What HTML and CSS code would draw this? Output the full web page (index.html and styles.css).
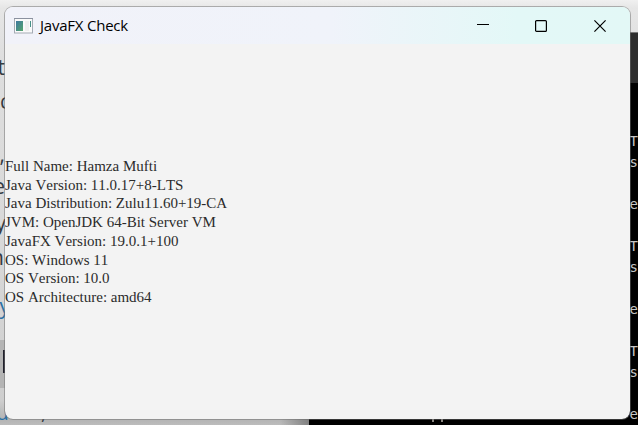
FILE: index.html
```
<!DOCTYPE html>
<html lang="en">
<head>
<meta charset="utf-8">
<title>JavaFX Check</title>
<link rel="stylesheet" href="styles.css">
</head>
<body>
<main class="desktop">
  <section class="document">
    <span class="frag" style="right:0;top:52px">t</span>
    <span class="frag" style="right:-5px;top:86px">c</span>
    <span class="frag" style="right:0;top:139px">,</span>
    <span class="frag" style="right:0;top:171px">e</span>
    <span class="frag" style="right:-1px;top:208px">y</span>
    <span class="frag" style="right:1px;top:242px">n</span>
    <span class="frag link" style="right:-5px;top:291px">y</span>
    <span class="code-block"></span>
    <span class="frag link" style="right:-4px;top:397px">u</span>
    <span class="comma">,</span>
  </section>
  <section class="terminal">
    <header class="terminal-bar"></header>
    <pre class="terminal-text">T
s

e

T
s

e

T
s

e</pre>
    <i class="tick first"></i><i class="tick second"></i>
  </section>
  <section class="window">
    <header class="titlebar">
      <svg class="app-icon" width="19" height="16" viewBox="0 0 19 16">
        <defs><linearGradient id="g" x2="1" y2="1"><stop stop-color="#3f78a0"/><stop offset="1" stop-color="#55a66c"/></linearGradient></defs>
        <rect x=".5" y=".5" width="18" height="14.500" fill="#fafafa" stroke="#a5abb4"/>
        <path d="M0 .5h19" stroke="#8b919f"/>
        <rect x="2" y="3" width="7" height="10" fill="url(#g)"/>
        <rect x="11" y="3" width="4" height="10" fill="#efefef"/>
        <path d="M16.500 3v6" stroke="#469087"/>
      </svg>
      <h1 class="title">JavaFX Check</h1>
      <nav class="controls">
        <svg width="12" height="12" viewBox="0 0 12 12"><path d="M0 4.500h12" stroke="#000"/></svg>
        <svg width="12" height="12" viewBox="0 0 12 12"><rect x=".6" y=".6" width="10.800" height="10.800" rx="1" fill="none" stroke="#000" stroke-width="1.200"/></svg>
        <svg width="12" height="12" viewBox="0 0 12 12"><path d="M.4.4l11.200 11.200M11.600.4L.4 11.600" stroke="#000" stroke-width="1.200"/></svg>
      </nav>
    </header>
    <div class="content">
      <div>Full Name: Hamza Mufti</div>
      <div>Java Version: 11.0.17+8-LTS</div>
      <div>Java Distribution: Zulu11.60+19-CA</div>
      <div>JVM: OpenJDK 64-Bit Server VM</div>
      <div>JavaFX Version: 19.0.1+100</div>
      <div>OS: Windows 11</div>
      <div>OS Version: 10.0</div>
      <div>OS Architecture: amd64</div>
    </div>
  </section>
</main>
</body>
</html>
```
FILE: styles.css
```
* { box-sizing: border-box; }
body { margin: 0; }
.desktop {
  position: relative;
  width: 638px;
  height: 425px;
  overflow: hidden;
  background: linear-gradient(#f0f0f0 0, #e6e6e6 8px, #dedede 60px, #d8d8d8 250px, #cecece 400px, #b4b4b4 419px, #bcbcbc 425px);
}
.document {
  position: absolute;
  left: 0;
  top: 0;
  width: 309px;
  height: 425px;
  background: linear-gradient(90deg, transparent 280px, rgba(0, 0, 0, .3) 309px) 0 419px / 309px 6px no-repeat;
}
.frag {
  position: absolute;
  margin-right: 304px;
  font: 21px/30px "Open Sans", sans-serif;
  color: #343b42;
}
.link { color: #2870a5; }
.code-block {
  position: absolute;
  left: 0;
  top: 340px;
  width: 5px;
  height: 48px;
  background: #b4b4b4;
}
.code-block::after {
  content: "";
  position: absolute;
  left: 3px;
  top: 10px;
  width: 2px;
  height: 23px;
  background: #20202c;
}
.comma {
  position: absolute;
  left: 41px;
  top: 397px;
  font: 20px/30px "Open Sans", sans-serif;
  color: #343b42;
}
.terminal {
  position: absolute;
  left: 309px;
  top: 32px;
  width: 329px;
  height: 393px;
  background: #000;
}
.terminal-bar {
  height: 51px;
  border-top: 1px solid #777;
  background: #2d2d2d;
}
.terminal-text {
  margin: 48px 0 0 320.500px;
  font: 14px/21px "DejaVu Sans Mono", monospace;
  color: #c4c4c4;
}
.tick {
  position: absolute;
  top: 387px;
  width: 2px;
  height: 3px;
  background: #8a8580;
}
.first { left: 123px; }
.second { left: 132px; }
.window {
  position: absolute;
  left: 4px;
  top: 6px;
  width: 627px;
  height: 414px;
  display: flex;
  flex-direction: column;
  border: 1px solid rgba(110, 110, 110, .5);
  border-radius: 9px;
  background: #f3f3f3;
  background-clip: padding-box;
  overflow: hidden;
}
.titlebar {
  flex: 0 0 37px;
  display: flex;
  align-items: center;
  padding: 0 24px 0 9px;
  background: linear-gradient(90deg, #f1f2f9 0, #f0f3fa 52%, #e3f8f7 82%, #e3f8f6 100%);
}
.title {
  margin: -2px 0 0 7px;
  font: 15px/20px "Open Sans", sans-serif;
  letter-spacing: -.22px;
  color: #000;
}
.controls {
  display: flex;
  gap: 47px;
  margin-left: auto;
}
.controls svg:first-child { margin-right: -1px; }
.controls svg, .app-icon { display: block; }
.content {
  flex: 1;
  display: flex;
  flex-direction: column;
  justify-content: center;
  padding-top: .6px;
  font: 15px/18.700px "Liberation Serif", serif;
  font-kerning: none;
  color: #2b2b2b;
  white-space: nowrap;
}
```
